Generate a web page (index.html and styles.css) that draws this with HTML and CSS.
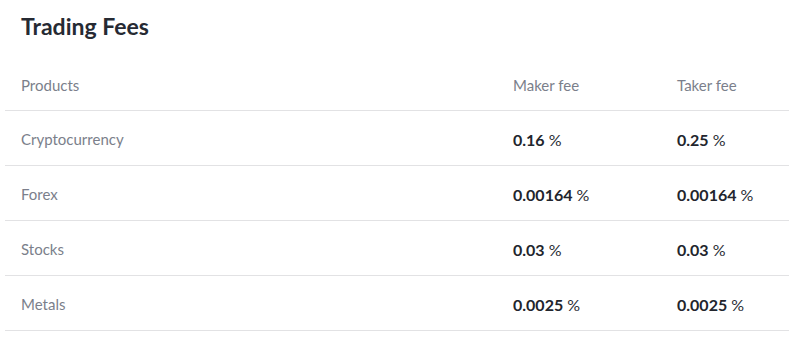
FILE: index.html
```html
<!DOCTYPE html>
<html>
<head>
<meta charset="utf-8">
<link rel="stylesheet" href="styles.css">
</head>
<body>
<div class="fees">
  <h2 class="fees-title">Trading Fees</h2>
  <table class="fees-table">
    <thead>
      <tr><th class="col-product">Products</th><th class="col-maker">Maker fee</th><th class="col-taker">Taker fee</th></tr>
    </thead>
    <tbody>
      <tr><td>Cryptocurrency</td><td class="val"><b>0.16</b> %</td><td class="val"><b>0.25</b> %</td></tr>
      <tr><td>Forex</td><td class="val"><b>0.00164</b> %</td><td class="val"><b>0.00164</b> %</td></tr>
      <tr><td>Stocks</td><td class="val"><b>0.03</b> %</td><td class="val"><b>0.03</b> %</td></tr>
      <tr><td>Metals</td><td class="val"><b>0.0025</b> %</td><td class="val"><b>0.0025</b> %</td></tr>
    </tbody>
  </table>
</div>
</body>
</html>
```
FILE: styles.css
```css
html, body { margin: 0; padding: 0; background: #fff; }
body { font-family: Lato, "Liberation Sans", sans-serif; }
.fees { padding: 0 1px 0 5px; }
.fees-title {
  margin: 0;
  padding: 12px 16px 0;
  height: 48px;
  box-sizing: border-box;
  font-size: 23px;
  font-weight: 700;
  color: #262a33;
  line-height: 28px;
}
.fees-table { width: 100%; border-collapse: collapse; table-layout: fixed; }
.fees-table th, .fees-table td {
  text-align: left;
  padding: 3px 0 0 16px;
  height: 55px;
  box-sizing: border-box;
  border-bottom: 1px solid #e2e2e4;
  font-size: 15px;
  font-weight: 400;
  color: #7b7f8b;
  vertical-align: middle;
}
.fees-table th { height: 62px; padding-top: 12px; }
.col-product { width: 492px; }
.col-maker { width: 164px; }
.fees-table td.val { color: #2a2d35; font-size: 16px; }
.fees-table td.val b { font-weight: 700; color: #22252d; }
```
